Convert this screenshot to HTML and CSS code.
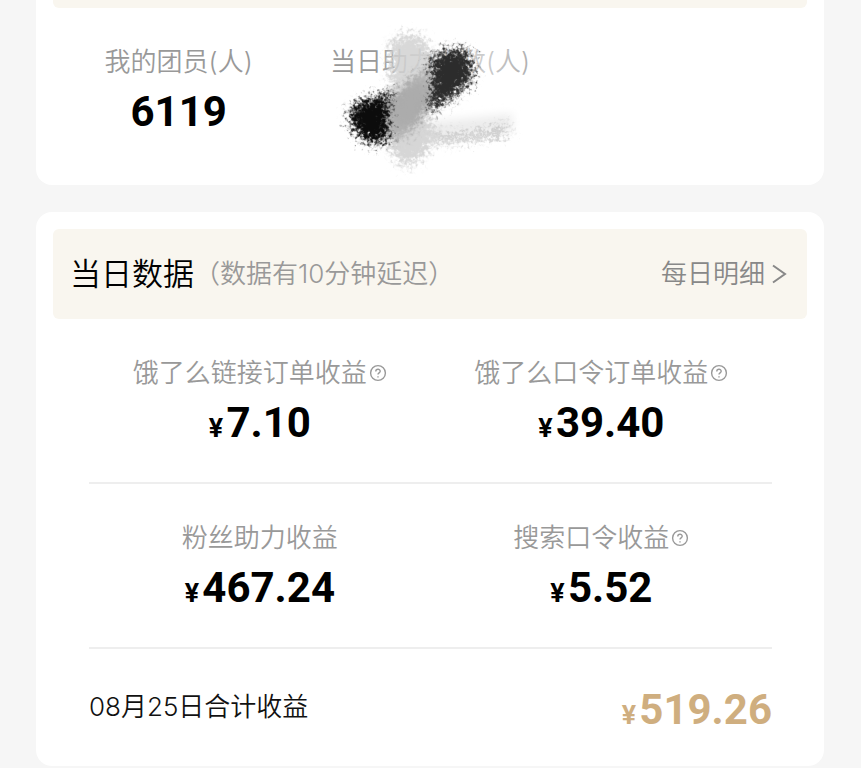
FILE: index.html
```html
<!DOCTYPE html>
<html lang="zh-CN">

<head>
    <meta charset="UTF-8">
    <meta name="viewport" content="width=device-width, initial-scale=1.0">
    <title>当日数据</title>
    <link rel="stylesheet" href="styles.css">
</head>

<body>

    <!-- Team card -->
    <section class="card card-team">
        <div class="bar-end"></div>
        <div class="team">
            <div class="stat">
                <div class="label">我的团员(人)</div>
                <div class="value">6119</div>
            </div>
            <div class="stat covered">
                <div class="label">当日助力人数(人)</div>
                <div class="value"></div>
                <!-- brush strokes over the number -->
                <svg class="scribble" width="220" height="160" viewBox="320 20 220 160" aria-hidden="true">
                    <defs>
                        <filter id="rough" x="-40%" y="-40%" width="180%" height="180%" color-interpolation-filters="sRGB">
                            <feGaussianBlur in="SourceGraphic" stdDeviation="3.5" result="soft" />
                            <feTurbulence type="fractalNoise" baseFrequency="0.28" numOctaves="2" seed="7" result="noise" />
                            <feDisplacementMap in="soft" in2="noise" scale="26" xChannelSelector="R" yChannelSelector="G" />
                            <feGaussianBlur stdDeviation="0.7" />
                        </filter>
                        <filter id="soft" x="-40%" y="-50%" width="180%" height="200%">
                            <feGaussianBlur stdDeviation="5" />
                        </filter>
                        <linearGradient id="fade" x1="0" x2="1" y1="0" y2="0">
                            <stop offset="0" stop-color="#fff" stop-opacity="0" />
                            <stop offset="0.3" stop-color="#fff" stop-opacity="0.6" />
                            <stop offset="0.7" stop-color="#fff" stop-opacity="0.5" />
                            <stop offset="1" stop-color="#fff" stop-opacity="0.2" />
                        </linearGradient>
                        <linearGradient id="grey" x1="0" x2="0" y1="0" y2="1">
                            <stop offset="0" stop-color="#c0c0c0" />
                            <stop offset="0.5" stop-color="#a6a6a6" />
                            <stop offset="1" stop-color="#bababa" />
                        </linearGradient>
                    </defs>
                    <rect x="378" y="44" width="156" height="38" fill="url(#fade)" />
                    <path d="M430 122 L512 114 L512 130 L430 142Z" fill="#ececec" filter="url(#soft)" />
                    <g filter="url(#rough)">
                        <path d="M390 42 L404 34 L422 36 L432 54 L430 84 L390 92Z" fill="#cecece" opacity="0.8" />
                        <path d="M388 136 L428 116 L438 134 L426 154 L406 168 L392 154Z" fill="#d6d6d6" />
                        <path d="M436 137 L476 134 L508 127 L508 134 L470 140 L436 142Z" fill="#a8a8a8" opacity="0.8" />
                    </g>
                    <g filter="url(#rough)">
                        <path d="M350 112 Q356 100 372 98 L394 92 L394 136 Q384 144 370 143 Q350 134 350 112Z" fill="#0c0c0c" />
                        <path d="M432 58 Q446 46 464 50 Q478 64 470 82 Q456 98 428 112 L424 92Z" fill="#2c2c2c" />
                    </g>
                    <path d="M389 100 L408 80 L430 66 L432 90 L424 118 L408 136 L388 140Z" fill="url(#grey)" filter="url(#rough)" />
                    <path d="M396 102 L410 86 L424 76 L424 98 L414 122 L396 130Z" fill="#acacac" filter="url(#soft)" />
                </svg>
            </div>
        </div>
    </section>

    <!-- Daily data card -->
    <section class="card">
        <header class="bar">
            <h2>当日数据</h2>
            <span class="note">（数据有10分钟延迟）</span>
            <a class="more" href="#">每日明细
                <svg width="16" height="20" viewBox="0 0 16 20" aria-hidden="true">
                    <path d="M2 1.5 L14 10 L2 18.5" />
                </svg>
            </a>
        </header>

        <div class="content">
            <div class="row">
                <div class="stat">
                    <div class="label">饿了么链接订单收益<button class="help" type="button" aria-label="说明">
                            <svg width="18" height="18" viewBox="0 0 18 18">
                                <circle cx="9" cy="9" r="7.4" />
                                <path d="M6.8 7.4 C6.8 4.6 11.2 4.6 11.2 7.3 C11.2 8.9 9 8.9 9 10.6 M9 12.2 V13.4" />
                            </svg>
                        </button></div>
                    <div class="value"><span class="yen">¥</span>7.10</div>
                </div>
                <div class="stat">
                    <div class="label">饿了么口令订单收益<button class="help" type="button" aria-label="说明">
                            <svg width="18" height="18" viewBox="0 0 18 18">
                                <circle cx="9" cy="9" r="7.4" />
                                <path d="M6.8 7.4 C6.8 4.6 11.2 4.6 11.2 7.3 C11.2 8.9 9 8.9 9 10.6 M9 12.2 V13.4" />
                            </svg>
                        </button></div>
                    <div class="value"><span class="yen">¥</span>39.40</div>
                </div>
            </div>

            <div class="row">
                <div class="stat">
                    <div class="label">粉丝助力收益</div>
                    <div class="value"><span class="yen">¥</span>467.24</div>
                </div>
                <div class="stat">
                    <div class="label">搜索口令收益<button class="help" type="button" aria-label="说明">
                            <svg width="18" height="18" viewBox="0 0 18 18">
                                <circle cx="9" cy="9" r="7.4" />
                                <path d="M6.8 7.4 C6.8 4.6 11.2 4.6 11.2 7.3 C11.2 8.9 9 8.9 9 10.6 M9 12.2 V13.4" />
                            </svg>
                        </button></div>
                    <div class="value"><span class="yen">¥</span>5.52</div>
                </div>
            </div>

            <div class="total">
                <span class="total-label">08月25日合计收益</span>
                <div class="value gold"><span class="yen">¥</span>519.26</div>
            </div>
        </div>
    </section>

</body>

</html>
```
FILE: styles.css
```css
* {
    box-sizing: border-box;
}

body {
    margin: 0;
    padding: 0 37px 2px 36px;
    background-color: #f6f6f6;
    font-family: Inter, "Noto Sans CJK SC", sans-serif;
    font-size: 26px;
    font-weight: 350;
    line-height: 36px;
    color: #000;
}

.card {
    background-color: #fff;
    border-radius: 16px;
    padding: 17px 17px 0;
}

.card-team {
    padding-top: 0;
    border-radius: 0 0 16px 16px;
    margin-bottom: 27px;
}

/* Beige bars */
.bar,
.bar-end {
    background-color: #f9f6ef;
    border-radius: 6px;
}

.bar-end {
    height: 8px;
    border-radius: 0 0 6px 6px;
}

.bar {
    display: flex;
    align-items: center;
    height: 90px;
    padding: 0 20px 0 17px;
}

.bar h2 {
    margin: 0;
    font-size: 31px;
    font-weight: 350;
}

.note {
    color: #999;
}

.more {
    display: flex;
    align-items: center;
    gap: 6px;
    margin-left: auto;
    color: #888;
    text-decoration: none;
}

.more svg {
    fill: none;
    stroke: #888;
    stroke-width: 2;
}

/* Numbers */
.team {
    display: grid;
    grid-template-columns: repeat(3, 1fr);
    padding-bottom: 14px;
}

.content {
    padding: 0 35px 0 36px;
}

.row {
    display: grid;
    grid-template-columns: 1fr 1fr;
    border-bottom: 2px solid #eee;
}

.stat {
    padding: 36px 0 35px;
    text-align: center;
}

.label {
    display: flex;
    align-items: center;
    justify-content: center;
    height: 36px;
    margin-bottom: 8px;
    color: #999;
    white-space: nowrap;
}

.value {
    height: 48px;
    line-height: 48px;
    font-family: Roboto, sans-serif;
    font-size: 42px;
    font-weight: 700;
}

.yen {
    margin-right: 3px;
    font-family: Inter, sans-serif;
    font-size: 26px;
}

.help {
    display: flex;
    padding: 0;
    margin-left: 2px;
    border: none;
    background: none;
    cursor: pointer;
}

.help svg {
    fill: none;
    stroke: #999;
    stroke-width: 1.4;
}

.covered {
    position: relative;
}

.scribble {
    position: absolute;
    top: 12px;
    left: 16px;
}

.total {
    display: flex;
    align-items: center;
    justify-content: space-between;
    padding: 37px 0 32px;
}

.total-label {
    padding-bottom: 6px;
    color: #111;
}

.gold {
    color: #cfae7f;
}
```
